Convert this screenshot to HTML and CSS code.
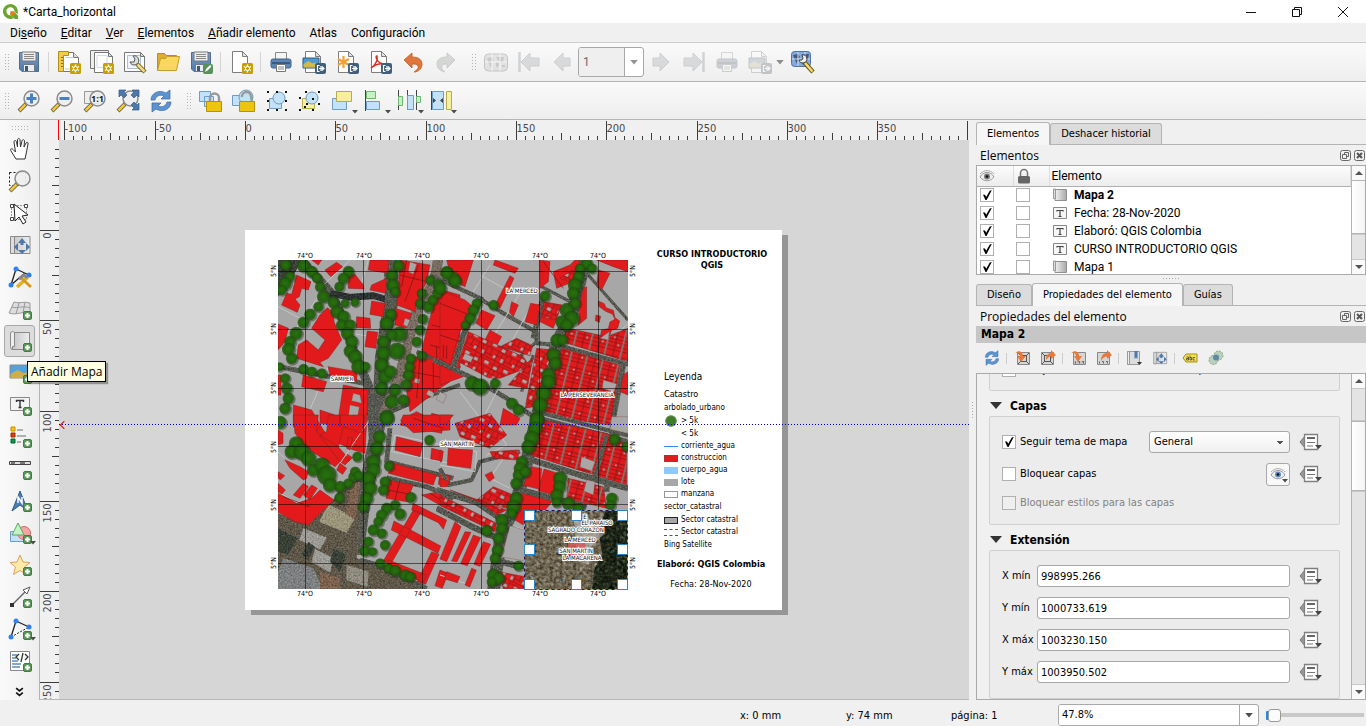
FILE: index.html
```html
<!DOCTYPE html>
<html lang="es">
<head>
<meta charset="utf-8">
<title>*Carta_horizontal</title>
<link rel="stylesheet" href="styles.css">
</head>
<body>
<svg class="defs" aria-hidden="true">
  <defs>
    <linearGradient id="g-steel" x1="0" y1="0" x2="0" y2="1"><stop offset="0" stop-color="#7ba0cc"/><stop offset="1" stop-color="#4f78a8"/></linearGradient>
    <linearGradient id="g-map" x1="0" y1="0" x2="1" y2="0"><stop offset="0" stop-color="#c4c4c4"/><stop offset="1" stop-color="#ededed"/></linearGradient>
    <linearGradient id="g-map2" x1="0" y1="0" x2="1" y2="0"><stop offset="0" stop-color="#f2f2f2"/><stop offset="1" stop-color="#a8a8a8"/></linearGradient>
  </defs>
  <symbol id="b-plus" viewBox="0 0 9 9"><rect x=".5" y=".5" width="8" height="8" rx="1.5" fill="#5c985c" stroke="#447a44"/><path d="M4.500 2v5M2 4.500h5" stroke="#fff" stroke-width="2"/></symbol>
  <symbol id="b-star" viewBox="0 0 11 11"><rect width="11" height="11" rx="1.500" fill="#c4a000"/><path d="M5.500 1.500v8M2 3.500l7 4M9 3.500l-7 4" stroke="#fff" stroke-width="1.300"/><circle cx="5.500" cy="5.500" r="2" fill="#c4a000" stroke="#fff"/></symbol>
  <symbol id="b-out" viewBox="0 0 11 11"><rect width="11" height="11" rx="2" fill="#415f78"/><path d="M4.500 2.500h-2v6h2M6 3v5M4 5.500h5M7 3.500l2 2-2 2" fill="none" stroke="#fff" stroke-width="1.200"/></symbol>
  <symbol id="b-menu" viewBox="0 0 6 4"><path d="M0 0h6L3 3.500z" fill="#4c4c4c"/></symbol>
  <symbol id="page" viewBox="0 0 24 24"><path d="M3.500 1.500h10l5 5v16h-15z" fill="#fff" stroke="#7d7d7d"/><path d="M13.500 1.500v5h5z" fill="#e4e4e4" stroke="#7d7d7d"/></symbol>
  <symbol id="mag" viewBox="0 0 24 24"><path d="M2 22l7-7" stroke="#555" stroke-width="4"/><path d="M2.500 21.500l6-6" stroke="#f3c932" stroke-width="2.500"/><circle cx="14.500" cy="9.500" r="7.500" fill="#eee" fill-opacity=".9" stroke="#8b8b8b" stroke-width="1.500"/></symbol>

  <symbol id="i-save" viewBox="0 0 24 24"><path d="M2.500 2.500h19v19H5l-2.500-2.500z" fill="url(#g-steel)" stroke="#4a6d98"/><path d="M5 2h14v9H5z" fill="#eee" stroke="#777"/><path d="M7 4.500h10M7 6.500h10M7 8.500h10" stroke="#888"/><path d="M6.500 14.500h11v7h-11z" fill="#ececec" stroke="#6b7b8f"/><path d="M8 16h3v5H8z" fill="#3d5878"/></symbol>
  <symbol id="i-new" viewBox="0 0 24 24"><path d="M2.500 2.500h14l5 5v14h-19z" fill="#fff" stroke="#777"/><path d="M16.500 2.500v5h5" fill="#ddd" stroke="#777"/><path d="M8.500 7.500h8M8 19h6" stroke="#bcd" fill="none"/><path d="M1.500 1.500h10v4h-5v16h-5z" fill="#f0cc4a" stroke="#b08e17"/><path d="M4 7.500h2M4 10.500h2M4 13.500h2M4 16.500h2" stroke="#8d6f0a"/><use href="#b-star" x="13" y="13" width="11" height="11"/></symbol>
  <symbol id="i-dup" viewBox="0 0 24 24"><path d="M.5.500h18v18H.5z" fill="#eee" stroke="#777"/><path d="M4.500 2.500h14l4 4v16h-18z" fill="#fff" stroke="#777"/><path d="M7 5.500h10v12H7z" fill="none" stroke="#cfdbe8"/><path d="M18.500 2.500v4h4z" fill="#ddd" stroke="#777"/><use href="#b-star" x="13" y="13" width="11" height="11"/></symbol>
  <symbol id="i-mgr" viewBox="0 0 24 24"><path d="M1.500 2.500h16l4 4v15h-20z" fill="#fff" stroke="#777"/><path d="M4.500 5.500h13v13h-13z" fill="#eef4fa" stroke="#a9c0da"/><path d="M17.500 2.500v4h4z" fill="#ddd" stroke="#777"/><path d="M14 14l8 8" stroke="#766012" stroke-width="4.500"/><path d="M14.500 14.500l7 7" stroke="#f1dc8c" stroke-width="2.500"/><path d="M10 6a4.500 4.500 0 1 1-3 6l4 0 1-3z" fill="#ddd" stroke="#555"/></symbol>
  <symbol id="i-open" viewBox="0 0 24 24"><path d="M1.500 20.500v-17h7l2 2h10v4" fill="#dcae2e" stroke="#b78d1e"/><path d="M1.500 20.500l3-12h5l2-2h12l-3 14z" fill="#f8d75c" stroke="#c69d2c"/></symbol>
  <symbol id="i-savet" viewBox="0 0 24 24"><use href="#i-save" width="24" height="24"/><rect x="14" y="14" width="10" height="10" rx="2" fill="#56915a"/><path d="M16 22l1-3 4-4 1.500 1.500-4 4z" fill="#fff"/></symbol>
  <symbol id="i-page" viewBox="0 0 24 24"><use href="#page" width="24" height="24"/><use href="#b-star" x="13" y="13" width="11" height="11"/></symbol>
  <symbol id="i-print" viewBox="0 0 24 24"><path d="M6.500 2.500h11v8h-11z" fill="#f5f5f5" stroke="#888"/><rect x="2" y="9" width="20" height="9" rx="2" fill="#5d85b4" stroke="#41628a"/><path d="M3 13h18" stroke="#395a82" stroke-width="2"/><path d="M7.500 14.500h9v7h-9z" fill="#fff" stroke="#777"/><path d="M9 17h6M9 19h6" stroke="#888"/></symbol>
  <symbol id="i-img" viewBox="0 0 24 24"><use href="#page" width="24" height="24"/><path d="M1 8h16v10H1z" fill="#4d9bd6" stroke="#2f5878"/><path d="M1.500 14l5-3 4 2.500 3-1 3 2v3h-15z" fill="#d6b84a"/><use href="#b-out" x="13" y="13" width="11" height="11"/></symbol>
  <symbol id="i-svg" viewBox="0 0 24 24"><use href="#page" width="24" height="24"/><path d="M8.500 6v12M3 9l11 6M14 9L3 15" stroke="#f4a033" stroke-width="2.200"/><use href="#b-out" x="13" y="13" width="11" height="11"/></symbol>
  <symbol id="i-pdf" viewBox="0 0 24 24"><use href="#page" width="24" height="24"/><path d="M3 18c5-3 7-9 6-12-2-1-1 7 7 8-4-1-9 1-13 4z" fill="none" stroke="#d8332b" stroke-width="1.500"/><use href="#b-out" x="13" y="13" width="11" height="11"/></symbol>
  <symbol id="i-undo" viewBox="0 0 24 24"><path d="M3 10l8-7v4c7 0 10 3 10 7 0 5-4 8-8 8 3-2 5-4 4-6-1-2-3-2-6-2v4z" fill="#e0763c" stroke="#bd5a22" stroke-width=".8"/></symbol>
  <symbol id="i-redo" viewBox="0 0 24 24"><path d="M21 10l-8-7v4C6 7 3 10 3 14c0 5 4 7 8 8-3-2-4-4-3-6s2-2 5-2v4z" fill="#7d9c7d" stroke="#5d6f5d"/></symbol>
  <symbol id="i-world" viewBox="0 0 24 24"><rect x=".5" y="4" width="23" height="17" rx="4" fill="#bbc" stroke="#555"/><path d="M3 8l5-1 2 3-2 2-1 6-2-4zM12 7h8l-1 5-3 1-2-3zM12 12l3 1-1 5-2-2zM18 15h3v2h-3z" fill="#667"/><path d="M8 4v17M16 4v17M1 12h22" stroke="#fff"/></symbol>
  <symbol id="i-first" viewBox="0 0 24 24"><path d="M2.500 2v20" stroke="#79869a" stroke-width="2.500"/><path d="M4 12l9-9v5h9v8h-9v5z" fill="#8ea0b6" stroke="#68788c"/></symbol>
  <symbol id="i-prev" viewBox="0 0 24 24"><path d="M4 12l9-9v5h7v8h-7v5z" fill="#8ea0b6" stroke="#68788c"/></symbol>
  <symbol id="i-next" viewBox="0 0 24 24"><path d="M20 12l-9-9v5H4v8h7v5z" fill="#8ea0b6" stroke="#68788c"/></symbol>
  <symbol id="i-last" viewBox="0 0 24 24"><path d="M21.500 2v20" stroke="#79869a" stroke-width="2.500"/><path d="M20 12l-9-9v5H2v8h9v5z" fill="#8ea0b6" stroke="#68788c"/></symbol>
  <symbol id="i-atlas" viewBox="0 0 24 24"><rect x=".5" y="1.500" width="19" height="15" rx="3" fill="#84a9da" stroke="#4e74a8"/><path d="M2 5l5-1 2 3-2 2-1 5-2-4zM11 4h7l-1 5-4 1zM11 10l3 2-2 3z" fill="#46597a"/><path d="M7 2v14M14 2v14M1 9h18" stroke="#cfe0f4"/><path d="M13 12l9 10" stroke="#6b5710" stroke-width="4.500"/><path d="M14 13l7.500 8.500" stroke="#f3dc7a" stroke-width="2.500"/><path d="M11 5a4 4 0 1 1-3 5l3 0 1-2z" fill="#eee" stroke="#444"/></symbol>

  <symbol id="i-zin" viewBox="0 0 24 24"><use href="#mag" width="24" height="24"/><path d="M14.500 4.500v10M9.500 9.500h10" stroke="#4a7fc0" stroke-width="3"/></symbol>
  <symbol id="i-zout" viewBox="0 0 24 24"><use href="#mag" width="24" height="24"/><path d="M9.500 9.500h10" stroke="#4a7fc0" stroke-width="3"/></symbol>
  <symbol id="i-z1" viewBox="0 0 24 24"><path d="M1.500 2.500h14v12h-14z" fill="#eee" stroke="#999"/><use href="#mag" width="24" height="24"/><text x="8" y="13" font-size="9" font-weight="700" font-family="Open Sans, sans-serif" fill="#222">1:1</text></symbol>
  <symbol id="i-zfull" viewBox="0 0 24 24"><use href="#mag" width="24" height="24"/><path d="M3 1h7l-2 2 3 3-3 3-3-3-2 2zM23 1h-7l2 2-3 3 3 3 3-3 2 2zM23 21h-7l2-2-3-3 3-3 3 3 2-2z" fill="#4c78ab" stroke="#345a86" stroke-width=".7"/></symbol>
  <symbol id="i-ref" viewBox="0 0 24 24"><path d="M2 11C2 4 10 0 17 4l4-3v9h-9l3-3c-4-2-8 0-9 4z" fill="#5c93d1" stroke="#3b6ca6" stroke-width=".7"/><path d="M22 13c0 7-8 11-15 7l-4 3v-9h9l-3 3c4 2 8 0 9-4z" fill="#5c93d1" stroke="#3b6ca6" stroke-width=".7"/></symbol>
  <symbol id="i-lock" viewBox="0 0 24 24"><path d="M.5 2.500h11v10H.5zM5.500 7.500h9v10h-9z" fill="#c3e2f8" stroke="#6d9cc4"/><path d="M11 12V9a4.500 4.500 0 0 1 9 0v3" fill="none" stroke="#999" stroke-width="2.500"/><path d="M7.500 12.500h15v10h-15z" fill="#eec50e" stroke="#b29208"/></symbol>
  <symbol id="i-unlock" viewBox="0 0 24 24"><path d="M.5 6.500h11v10H.5z" fill="#c3e2f8" stroke="#6d9cc4"/><circle cx="14" cy="8" r="7" fill="#c3e2f8" stroke="#6d9cc4"/><path d="M10 8a4.500 4.500 0 0 1 9-1l1 5" fill="none" stroke="#999" stroke-width="2.500"/><path d="M7.500 12.500h15v10h-15z" fill="#eec50e" stroke="#b29208"/></symbol>
  <symbol id="i-group" viewBox="0 0 24 24"><path d="M4.500 9.500h12v10h-12z" fill="#c3e2f8" stroke="#6d9cc4"/><circle cx="14" cy="9" r="6" fill="#c3e2f8" stroke="#6d9cc4"/><path d="M2 2h2v2H2zM11 2h2v2h-2zM20 2h2v2h-2zM2 11h2v2H2zM20 11h2v2h-2zM2 20h2v2H2zM11 20h2v2h-2zM20 20h2v2h-2z" fill="#111"/></symbol>
  <symbol id="i-ungroup" viewBox="0 0 24 24"><path d="M4.500 9.500h12v10h-12z" fill="#f5efa0" stroke="#b5ac4e"/><circle cx="14" cy="9" r="6" fill="#c3e2f8" stroke="#6d9cc4"/><path d="M7 2h2v2H7zM20 2h2v2h-2zM1 8h2v2H1zM1 20h2v2H1zM8 14h2v2H8zM20 14h2v2h-2zM14 9h2v2h-2zM14 20h2v2h-2zM6 17h2v2H6z" fill="#111"/></symbol>
  <symbol id="i-raise" viewBox="0 0 24 24"><path d="M1.500 9.500h14v11h-14z" fill="#c3e2f8" stroke="#6d9cc4"/><path d="M5.500 2.500h15v10h-15z" fill="#f5efa0" stroke="#b5ac4e"/></symbol>
  <symbol id="i-align" viewBox="0 0 24 24"><path d="M1.500 1v21" stroke="#444"/><path d="M2.500 2.500h9v7h-9z" fill="#c5f2c5" stroke="#6fb56f"/><path d="M2.500 12.500h13v8h-13z" fill="#c3e2f8" stroke="#6d9cc4"/></symbol>
  <symbol id="i-dist" viewBox="0 0 24 24"><path d="M1.500 1v20M10.500 1v20M19.500 1v20" stroke="#444"/><path d="M1.500 7.500h4v9h-4zM19.500 7.500h4v6h-4z" fill="#c5f2c5" stroke="#6fb56f"/><path d="M10.500 6.500h6v14h-6z" fill="#c3e2f8" stroke="#6d9cc4"/></symbol>
  <symbol id="i-resize" viewBox="0 0 24 24"><path d="M1.500 2v19" stroke="#444"/><path d="M2.500 2.500h11v18h-11z" fill="#c3e2f8" stroke="#6d9cc4"/><path d="M3 9v5l3-2.500zM13 9v5l-3-2.500z" fill="#444"/><path d="M16.500 2.500h5v18h-5z" fill="#f5efa0" stroke="#b5ac4e"/></symbol>

  <symbol id="i-pan" viewBox="0 0 24 24"><path d="M8 22l-5-8c-1.500-2 1-3 2-1.500L7.500 15 6 5c0-2 2-2 2.500 0l1 5V3c0-2 2.500-2 2.500 0l.5 7L14 4c.5-2 2.500-1.500 2.500 0L16 10l2-4c1-1.500 2.500-.5 2 1l-1.500 8-1.500 7z" fill="#fff" stroke="#333"/></symbol>
  <symbol id="i-zoom" viewBox="0 0 24 24"><path d="M1.500 3.500h16v13h-16z" fill="none" stroke="#111" stroke-dasharray="2 2"/><use href="#mag" width="24" height="24"/></symbol>
  <symbol id="i-sel" viewBox="0 0 24 24"><path d="M3.500 4.500h15v14h-15z" fill="none" stroke="#333" stroke-dasharray="1 2"/><path d="M2.500 3.500h3v3h-3zM16.500 3.500h3v3h-3zM2.500 16.500h3v3h-3z" fill="#fff" stroke="#444"/><path d="M6 3l1 17 4-4 4 7 3-2-4-6 6-1z" fill="#fff" stroke="#222"/></symbol>
  <symbol id="i-move" viewBox="0 0 24 24"><path d="M6 3.500h16v17H3z" fill="url(#g-map)" stroke="#8a8a8a"/><path d="M2.500 3.500h4v17h-4z" fill="#ddd" stroke="#8a8a8a"/><path d="M14 5l4 5h-2.500v2h-3v-2H10zM14 21l4-4h-8zM6 14l4-4v8zM22 14l-4-4v8z" fill="#4c78ab"/></symbol>
  <symbol id="i-node" viewBox="0 0 24 24"><path d="M8 4L3 20M8 4l13 6M3 20L17 8" fill="none" stroke="#222" stroke-width="1.300"/><path d="M9 22L20 12" stroke="#e6ae23" stroke-width="3.500"/><path d="M12 12l11 10" stroke="#d59a1d" stroke-width="3"/><path d="M11 14l5-4 3 3" stroke="#888" stroke-width="3" fill="none"/><circle cx="8" cy="4" r="2.500" fill="#2f80f0"/><circle cx="21" cy="10" r="2.500" fill="#2f80f0"/><circle cx="3" cy="20" r="2.500" fill="#2f80f0"/></symbol>
  <symbol id="i-3d" viewBox="0 0 24 24"><path d="M1 16L6 5c5 2 9-1 16 1v11c-7-4-13 2-21-1z" fill="#ddd" stroke="#999"/><path d="M4 10c6 2 11-2 18 1M11 6L8 17M17 5l-2 11" fill="none" stroke="#999"/><use href="#b-plus" x="15" y="14" width="9" height="9"/></symbol>
  <symbol id="i-map" viewBox="0 0 24 24"><path d="M5 3.500h16.500v17H4z" fill="url(#g-map)" stroke="#8a8a8a"/><path d="M2.500 3.500q2-2 4 0v14h-2v3q-2 0-2-3z" fill="#eee" stroke="#8a8a8a"/><use href="#b-plus" x="15" y="14" width="9" height="9"/></symbol>
  <symbol id="i-pic" viewBox="0 0 24 24"><path d="M2 4h20v13H2z" fill="#4fa3e0" stroke="#888"/><path d="M2.500 13l7-4 6 3 6-1v6h-19z" fill="#cfae4a"/><use href="#b-plus" x="15" y="14" width="9" height="9"/></symbol>
  <symbol id="i-label" viewBox="0 0 24 24"><path d="M2.500 4.500h19v13h-19z" fill="#f4f4f4" stroke="#888"/><path d="M8.500 9V7.500h7V9M12 7.500v7M10.500 14.500h3" fill="none" stroke="#333" stroke-width="1.400"/><use href="#b-plus" x="15" y="14" width="9" height="9"/></symbol>
  <symbol id="i-leg" viewBox="0 0 24 24"><path d="M3 2h4v4H3z" fill="#ffc400" stroke="#c88b00"/><path d="M3 8h4v4H3z" fill="#e63c00" stroke="#a02a00"/><path d="M3 14h4v4H3z" fill="#00a050" stroke="#006030"/><path d="M9 5h6M9 11h9M9 17h4" stroke="#999" stroke-width="1.500"/><use href="#b-plus" x="15" y="14" width="9" height="9"/></symbol>
  <symbol id="i-scale" viewBox="0 0 24 24"><path d="M1.500 4.500h21v3h-21z" fill="#ddd" stroke="#444"/><path d="M3 6h4M12 6h5" stroke="#777" stroke-width="2"/><use href="#b-plus" x="15" y="14" width="9" height="9"/></symbol>
  <symbol id="i-north" viewBox="0 0 24 24"><path d="M12 2l8 20-8-6-8 6z" fill="#4f7fb2" stroke="#2e5a87"/><path d="M10 14V8l4 6V8" fill="none" stroke="#fff" stroke-width="1.500"/><use href="#b-plus" x="15" y="14" width="9" height="9"/></symbol>
  <symbol id="i-shape" viewBox="0 0 24 24"><path d="M2.500 10.500h13v10h-13z" fill="#c3e2f8" stroke="#6d9cc4"/><circle cx="16" cy="12" r="6.500" fill="#f5a3a3" stroke="#d06a6a"/><path d="M10 2l6 12H4z" fill="#c5f2c5" stroke="#5fa55f"/><use href="#b-plus" x="15" y="14" width="9" height="9"/></symbol>
  <symbol id="i-star" viewBox="0 0 24 24"><path d="M12 2l3 7 7 .5-5.500 4.500 2 7.500-6.500-4-6.500 4 2-7.500L2 9.500 9 9z" fill="#fdeaa8" stroke="#e0a05a"/><use href="#b-plus" x="15" y="14" width="9" height="9"/></symbol>
  <symbol id="i-arrow" viewBox="0 0 24 24"><path d="M4 20L18 6" stroke="#666" stroke-width="1.500"/><path d="M2 18h4v4H2z" fill="#333"/><path d="M22 2l-7 3 4 4z" fill="#fff" stroke="#555"/><use href="#b-plus" x="15" y="14" width="9" height="9"/></symbol>
  <symbol id="i-poly" viewBox="0 0 24 24"><path d="M8 4L3 20M8 4l13 6" fill="none" stroke="#222" stroke-width="1.300"/><path d="M3 20l18-10" stroke="#222" stroke-dasharray="2 1.500"/><circle cx="8" cy="4" r="2.500" fill="#2f80f0"/><circle cx="21" cy="10" r="2.500" fill="#2f80f0"/><circle cx="3" cy="20" r="2.500" fill="#2f80f0"/><use href="#b-plus" x="15" y="14" width="9" height="9"/></symbol>
  <symbol id="i-html" viewBox="0 0 24 24"><path d="M2.500 2.500h19v19h-19z" fill="#fff" stroke="#888"/><path d="M4 6h5M4 9h4M4 12h6M4 15h9M4 18h8" stroke="#5b8cc4" stroke-width="1.600"/><path d="M11 5L8 8l3 3M17 5l3 3-3 3M15 4l-2 9" fill="none" stroke="#333" stroke-width="1.300"/><use href="#b-plus" x="15" y="14" width="9" height="9"/></symbol>

  <symbol id="i-eye" viewBox="0 0 16 12"><path d="M1 7C4 1 12 1 15 7c-4 5-10 5-14 0z" fill="#eee" stroke="#999"/><path d="M1 4C5-.500 11-.500 15 4" fill="none" stroke="#aaa"/><circle cx="8" cy="6.500" r="3" fill="var(--iris, #777)"/><circle cx="8" cy="6.500" r="1.300" fill="#111"/></symbol>
  <symbol id="i-padlock" viewBox="0 0 14 16"><path d="M3.500 8V5a3.500 3.500 0 0 1 7 0v3" fill="none" stroke="#777" stroke-width="1.500"/><rect x="1" y="8" width="12" height="7.500" rx="1.500" fill="#666"/></symbol>
  <symbol id="i-rowmap" viewBox="0 0 14 14"><path d="M2 1.500h11.500v11H2z" fill="url(#g-map2)" stroke="#909090"/><path d="M.5 1v9.500h2V1z" fill="#ddd" stroke="#999"/></symbol>
  <symbol id="i-rowtext" viewBox="0 0 14 14"><path d="M.5 1.500h13v11H.5z" fill="#f6f6f6" stroke="#888"/><path d="M4 5.500v-1h6v1M7 4.500v5.500M5.500 10.500h3" fill="none" stroke="#444" stroke-width="1.200"/></symbol>
  <symbol id="i-float" viewBox="0 0 11 11"><rect x=".5" y=".5" width="10" height="10" rx="2" fill="none" stroke="#666"/><path d="M4.500 4V2.500h4v4H7M2.500 4.500h4v4h-4z" fill="none" stroke="#666"/></symbol>
  <symbol id="i-close" viewBox="0 0 11 11"><rect x=".5" y=".5" width="10" height="10" rx="2" fill="none" stroke="#666"/><path d="M3 3l5 5M8 3L3 8" stroke="#555" stroke-width="2"/></symbol>
  <symbol id="i-over" viewBox="0 0 24 18"><path d="M6 3v12L1 9z" fill="#999" stroke="#777"/><path d="M5.500 1.500h13v15h-13z" fill="#fff" stroke="#808080" stroke-width="1.300"/><path d="M8 5h8" stroke="#555" stroke-width="1.800"/><path d="M8 9.500h8M8 13h6" stroke="#777"/><path d="M16 12h7l-3.500 4z" fill="#444"/></symbol>
  <symbol id="p-toitem" viewBox="0 0 16 16"><path d="M3.500 2.500h12v12h-12z" fill="#d6d6d6" stroke="#888"/><path d="M6.500 5.500h6v6h-6zM4 3l3 3M15 3l-3 3M4 14l3-3M15 14l-3-3" fill="none" stroke="#555"/><path d="M1 3c5-4 8 0 8 3h3l-5 6-4-6h3C6 4 4 2 1 3z" fill="#e8793a"/></symbol>
  <symbol id="p-tocanvas" viewBox="0 0 16 16"><path d="M1.500 2.500h12v12h-12z" fill="#d6d6d6" stroke="#888"/><path d="M4.500 5.500h6v6h-6zM2 3l3 3M2 14l3-3M13 14l-3-3" fill="none" stroke="#555"/><path d="M6 10c0-5 2-7 5-7V0l5 5-5 4V6.500c-2 0-3 1-5 3.500z" fill="#e8793a"/></symbol>
  <symbol id="p-scalein" viewBox="0 0 16 16"><path d="M3.500 2.500h12v12h-12z" fill="#d6d6d6" stroke="#888"/><path d="M4 11h11v3H4z" fill="#c4c4c4"/><path d="M5.500 11.500v2M8 11.500h1.500v2M12 11.500h1.500v2" fill="none" stroke="#666"/><path d="M1 3c5-4 8 0 8 3h3l-4 6-4-6h2C6 4 4 2 1 3z" fill="#e8793a"/></symbol>
  <symbol id="p-scaleout" viewBox="0 0 16 16"><path d="M1.500 2.500h12v12h-12z" fill="#d6d6d6" stroke="#888"/><path d="M3.500 11.500v2M6 11.500h1.500v2M10 11.500h1.500v2" fill="none" stroke="#666"/><path d="M5 11c0-6 3-8 6-8V0l5 5-5 4V6.500c-2 0-4 1-6 4.500z" fill="#e8793a"/></symbol>
  <symbol id="p-book" viewBox="0 0 16 16"><path d="M1.500 1.500h12v13h-12z" fill="#ddd" stroke="#999"/><path d="M1.500 1.500h2v13h-2z" fill="#eee" stroke="#999"/><path d="M8.500 1h3v8L10 7.500 8.500 9z" fill="#4c78ab"/><path d="M11 12h5l-2.500 3z" fill="#333"/></symbol>
  <symbol id="p-abc" viewBox="0 0 16 16"><path d="M1 8l3-4h11v8H4z" fill="#f6e04a" stroke="#a98d0e"/><path d="M4.500 7h2v3h-2v-1.500h2M8 5.500v4.500h1.500V7.500H8M13 7.500h-2V10h2" fill="none" stroke="#444" stroke-width=".8"/></symbol>
  <symbol id="p-clip" viewBox="0 0 16 16"><circle cx="10.500" cy="5.500" r="4.500" fill="#b9cfb9" stroke="#8aa88a" stroke-dasharray="2 1"/><circle cx="5.500" cy="10" r="4.500" fill="#b9cfb9" stroke="#8aa88a" stroke-dasharray="2 1"/><circle cx="8" cy="7.500" r="3" fill="#6288a8"/></symbol>
</svg>

<header class="titlebar">
  <svg class="logo" viewBox="0 0 18 18"><path d="M9 1a8 8 0 1 0 3.500 15.200L9.500 13A4.300 4.300 0 1 1 13.200 9l3 3A8 8 0 0 0 9 1z" fill="#6aa62e"/><path d="M9 9h3.500l4.500 4.500V17h-3.500L9 12.500z" fill="#6aa62e"/><path d="M9 9h3l2 2-3 3-2-2z" fill="#ee7913"/></svg>
  <span class="title">*Carta_horizontal</span>
  <div class="winbtns">
    <button type="button" aria-label="Minimizar"><svg viewBox="0 0 12 12"><path d="M1 6.500h10" stroke="#111"/></svg></button>
    <button type="button" aria-label="Restaurar"><svg viewBox="0 0 12 12"><path d="M1.500 3.500h7v7h-7zM3.500 3.500v-2h7v7h-2" fill="none" stroke="#111"/></svg></button>
    <button type="button" aria-label="Cerrar"><svg viewBox="0 0 12 12"><path d="M1 1l10 10M11 1L1 11" stroke="#111"/></svg></button>
  </div>
</header>
<nav class="menubar">
  <a href="#">Di<u>s</u>eño</a><a href="#"><u>E</u>ditar</a><a href="#"><u>V</u>er</a><a href="#"><u>E</u>lementos</a><a href="#"><u>A</u>ñadir elemento</a><a href="#">Atlas</a><a href="#">Configuración</a>
</nav>
<div class="toolbar">
  <i class="grip"></i>
  <button class="tool" type="button" data-icon="save" aria-label="Guardar"></button>
  <i class="sep"></i>
  <button class="tool" type="button" data-icon="new" aria-label="Nueva"></button>
  <button class="tool" type="button" data-icon="dup" aria-label="Duplicar"></button>
  <button class="tool" type="button" data-icon="mgr" aria-label="Administrador"></button>
  <button class="tool" type="button" data-icon="open" aria-label="Abrir"></button>
  <button class="tool" type="button" data-icon="savet" aria-label="Guardar plantilla"></button>
  <i class="sep"></i>
  <button class="tool" type="button" data-icon="page" aria-label="Añadir página"></button>
  <i class="sep"></i>
  <button class="tool" type="button" data-icon="print" aria-label="Imprimir"></button>
  <button class="tool" type="button" data-icon="img" aria-label="Exportar imagen"></button>
  <button class="tool" type="button" data-icon="svg" aria-label="Exportar SVG"></button>
  <button class="tool" type="button" data-icon="pdf" aria-label="Exportar PDF"></button>
  <button class="tool" type="button" data-icon="undo" aria-label="Deshacer"></button>
  <button class="tool" type="button" data-icon="redo" aria-label="Rehacer" disabled></button>
  <i class="grip mid"></i>
  <button class="tool" type="button" data-icon="world" aria-label="Vista de atlas" disabled></button>
  <button class="tool" type="button" data-icon="first" aria-label="Primero" disabled></button>
  <button class="tool" type="button" data-icon="prev" aria-label="Anterior" disabled></button>
  <div class="pagebox"><input value="1" aria-label="Objeto" disabled><button type="button" aria-label="Lista" disabled><svg class="caret"><use href="#b-menu"/></svg></button></div>
  <button class="tool" type="button" data-icon="next" aria-label="Siguiente" disabled></button>
  <button class="tool" type="button" data-icon="last" aria-label="Último" disabled></button>
  <button class="tool" type="button" data-icon="print" aria-label="Imprimir atlas" disabled></button>
  <button class="tool" type="button" data-icon="img" aria-label="Exportar atlas" disabled></button>
  <svg class="caret pale"><use href="#b-menu"/></svg>
  <button class="tool" type="button" data-icon="atlas" aria-label="Configuración de atlas"></button>
</div>
<div class="toolbar second">
  <i class="grip"></i>
  <button class="tool" type="button" data-icon="zin" aria-label="Acercar"></button>
  <button class="tool" type="button" data-icon="zout" aria-label="Alejar"></button>
  <button class="tool" type="button" data-icon="z1" aria-label="Zum 100%"></button>
  <button class="tool" type="button" data-icon="zfull" aria-label="Zum general"></button>
  <button class="tool" type="button" data-icon="ref" aria-label="Actualizar"></button>
  <i class="grip mid"></i>
  <button class="tool" type="button" data-icon="lock" aria-label="Bloquear"></button>
  <button class="tool" type="button" data-icon="unlock" aria-label="Desbloquear"></button>
  <button class="tool" type="button" data-icon="group" aria-label="Agrupar"></button>
  <button class="tool" type="button" data-icon="ungroup" aria-label="Desagrupar"></button>
  <button class="tool drop" type="button" data-icon="raise" aria-label="Subir"></button>
  <button class="tool drop" type="button" data-icon="align" aria-label="Alinear"></button>
  <button class="tool drop" type="button" data-icon="dist" aria-label="Distribuir"></button>
  <button class="tool drop" type="button" data-icon="resize" aria-label="Redimensionar"></button>
</div>

<main class="work">
  <div class="toolbox">
    <i class="grip flat"></i>
    <button class="tool" type="button" data-icon="pan" aria-label="Desplazar"></button>
    <button class="tool" type="button" data-icon="zoom" aria-label="Zum"></button>
    <button class="tool" type="button" data-icon="sel" aria-label="Seleccionar"></button>
    <button class="tool" type="button" data-icon="move" aria-label="Mover contenido"></button>
    <button class="tool" type="button" data-icon="node" aria-label="Editar nodos"></button>
    <button class="tool" type="button" data-icon="3d" aria-label="Añadir mapa 3D"></button>
    <button class="tool on" type="button" data-icon="map" aria-label="Añadir Mapa"><span class="tip">Añadir Mapa</span></button>
    <button class="tool" type="button" data-icon="pic" aria-label="Añadir imagen"></button>
    <button class="tool" type="button" data-icon="label" aria-label="Añadir etiqueta"></button>
    <button class="tool" type="button" data-icon="leg" aria-label="Añadir leyenda"></button>
    <button class="tool" type="button" data-icon="scale" aria-label="Añadir escala"></button>
    <button class="tool" type="button" data-icon="north" aria-label="Añadir norte"></button>
    <button class="tool drop" type="button" data-icon="shape" aria-label="Añadir forma"></button>
    <button class="tool" type="button" data-icon="star" aria-label="Añadir marcador"></button>
    <button class="tool" type="button" data-icon="arrow" aria-label="Añadir flecha"></button>
    <button class="tool drop" type="button" data-icon="poly" aria-label="Añadir nodo"></button>
    <button class="tool" type="button" data-icon="html" aria-label="Añadir HTML"></button>
    <button class="more" type="button" aria-label="Más"><svg viewBox="0 0 8 9"><path d="M1 1l3 2.500L7 1M1 5l3 2.500L7 5" fill="none" stroke="#111" stroke-width="1.500"/></svg></button>
  </div>
  <div class="stage">
    <div class="corner"></div>
    <svg class="ruler rh" id="rh"></svg>
    <svg class="ruler rv" id="rv"></svg>
    <div class="canvas">
      <section class="paper">
        <svg class="map" id="map" viewBox="268 250 370 349">
          <defs>
            <filter id="noise" x="0" y="0" width="1" height="1" color-interpolation-filters="sRGB"><feTurbulence type="fractalNoise" baseFrequency=".2" numOctaves="3" seed="7"/><feColorMatrix values=".5 .5 .3 0 -.15 .5 .5 .27 0 -.15 .5 .5 .22 0 -.15 0 0 0 0 1"/><feComposite in2="SourceGraphic" operator="in" result="n"/><feBlend in="n" in2="SourceGraphic" mode="soft-light"/></filter>
            <filter id="rough" x="0" y="0" width="1" height="1" color-interpolation-filters="sRGB"><feTurbulence type="fractalNoise" baseFrequency=".3" numOctaves="4" seed="3"/><feColorMatrix values=".9 .9 .4 0 -.6 .9 .9 .4 0 -.6 .9 .9 .4 0 -.62 0 0 0 0 1"/><feComposite in2="SourceGraphic" operator="in" result="n"/><feBlend in="n" in2="SourceGraphic" mode="soft-light"/></filter>
            <radialGradient id="tree"><stop offset="0" stop-color="#2a7010"/><stop offset=".6" stop-color="#22650b"/><stop offset="1" stop-color="#1c4d0b" stop-opacity=".6"/></radialGradient>
            <pattern id="dense" width="48" height="62" patternUnits="userSpaceOnUse" patternTransform="rotate(14)"><rect width="48" height="62" fill="#e31a1c"/><path d="M0 8h48M0 19h48M0 29h48M0 41h48M0 52h48M21 0v62" stroke="#6e1414" stroke-width="2"/><path d="M44 0v62" stroke="#7b7f78" stroke-width="5"/><path d="M12 11h5v5h-5zM28 32h5v6h-5z" fill="#a7a7a7"/></pattern>
            <pattern id="small" width="64" height="58" patternUnits="userSpaceOnUse" patternTransform="rotate(27)"><rect width="64" height="58" fill="#e31a1c"/><path d="M0 12h30M30 6h34M0 26h64M0 40h34M34 46h30M0 57h64M14 0v26M30 0v26M46 6v20M10 26v31M24 26v14M38 26v31M54 26v20" fill="none" stroke="#701616" stroke-width="1.800"/><path d="M16 14h12v9H16zM48 9h14v9H48zM26 42h8v12h-8zM0 42h8v9H0z" fill="#a7a7a7"/></pattern>
            <clipPath id="frame"><path d="M278 260h350v329H278z"/></clipPath>
          </defs>
          <g clip-path="url(#frame)">
            <path d="M278 260h350v329H278z" fill="#a7a7a7"/>
            <g class="q" transform="translate(240 225) scale(.3333)">
              <g class="road" filter="url(#noise)">
                <path class="fill" d="M114 105h70l-30 60-40 50z"/>
                <path stroke-width="26" d="M190 112L270 200 300 260 350 400 385 480 400 640 355 860"/>
                <path class="deep" stroke-width="20" d="M270 205L330 217 400 212 455 228"/>
                <path stroke-width="40" d="M452 105L455 230 440 300 425 400 415 600 400 700 370 840 350 990"/>
                <path class="tan" stroke-width="30" d="M595 100L585 165 530 260 505 350 480 450 430 570"/>
                <path stroke-width="14" d="M114 425L270 455 385 478"/>
                <path stroke-width="12" d="M530 380L660 430M430 570L560 515 660 480M635 430L675 330"/>
              </g>
              <g class="lotline"><path d="M235 215L120 380M385 105L360 190M330 105L240 190 200 155M114 245L180 280M265 425L190 600M310 320L420 340"/></g>
              <g class="red">
                <path d="M170 150L213 170 205 195 185 190 178 215 165 222 180 240 172 262 125 240 140 205 155 208zM114 297L145 310 135 350 114 375zM262 248L280 262 282 290 305 345 265 400 240 412 250 425 170 400 175 360 200 345 235 375 255 345 215 310 240 270zM350 275l40 5 2 30-44-2zM382 318l31 4-5 48-33-5zM395 228l40 7-5 40-40-7zM390 105h55v40l-60-10zM325 150l20-2 25 32 2 12-47-2zM395 180l45-20-2 45-48-10zM255 135l35-23 18 13-36 30zM215 105h30l-10 15zM480 105l90 15-10 50-30 60-5 30-55-20 5-60zM465 250l50 15-15 45-35-10zM590 190l70 20v220l-85-35-30-20 30-115zM520 395l80 10 30 30v35l-30 20-90 70-10-60zM114 450h9v60h-9zM190 450l70 20-10 30-65-15zM310 480l75 15-10 190-35-10-55-25zM160 540l55 15 35 60 80 90-15 15-90-60-65-55zM240 555l45 15v30l-45-5zM264 425l88 15-2 28-80-18zM480 600l10-20 40-20 30 15 10 25 5-35 40 10-10 50z"/>
              </g>
              <g class="hole"><path d="M340 505l20 5 5 25-30-8zM330 540l28 6-10 55-25-8zM525 460l15 3-3 13-15-4zM565 495l18 8-4 15-20-10zM600 500l20 10-10 25-22-12zM510 110l20 8-10 30-15-8zM495 280l15 5-8 20-12-6z"/></g>
              <path class="thin" d="M480 150l80 20M500 105l-15 80M535 120l-40 110M575 300l85 20M570 360l80 20M590 365v35M605 365v40M620 370v40M540 400l-10 120M580 405v100M510 440l110 20"/>
            </g>
            <g class="q" transform="translate(440 225) scale(.3333)">
              <g class="road" filter="url(#noise)">
                <path stroke-width="12" d="M-30 150L110 215 190 265 290 322V355L350 360 570 420"/>
                <path stroke-width="9" d="M440 145L564 285M305 185L400 235M290 350L160 465M280 390L245 500"/>
                <path stroke-width="16" d="M125 215L70 330 40 425M310 215L280 340M550 420L520 580 500 800"/>
                <path stroke-width="38" d="M435 105L395 270 355 345 330 420 290 580 265 690 225 850 185 920 160 1100"/>
                <path stroke-width="14" d="M-20 405L100 460 200 520 280 575 564 650"/>
              </g>
              <g class="lotline"><path d="M120 150l90 50M240 205l-80 130M275 240l-60 110M60 500l60 80M180 480l-60 120M560 300l-70 60M150 120L100 200"/></g>
              <g class="red">
                <path d="M20 105h80L75 185 35 165zM0 195l75 30 30 25-45 70-30 100-30-20zM0 420l70 35L0 480zM125 255l40 17-25 43-32-20zM150 315l35 20-15 27-35-17zM165 105l70 25-10 15-65-25zM210 152l12 8-42 90-15-10zM215 230l20 10-15 35-12-13zM272 235l28 5-10 60-35-10zM300 105l30 5-5 60-25 20zM340 140l50-20 15-15 15 3-20 62-50 20zM312 230l53 10-25 70-40-20zM430 190l10-5v95l-25 20 5-70zM475 135l35 10-25 50-15-15zM470 105h94v35l-44-15zM475 228l18 8 5 12 22 8 5 22 14 10-6 22-18 6-8 20-25-6 3-15 20-4 5-20 15-8-8-16-20-8-22-16zM468 270l14 4-4 18-12-5zM550 450l14-10v70l-24-10zM190 550l50 30-10 20h-50z"/>
                <path fill="url(#small)" d="M85 320L250 395 270 425 180 460 145 458 55 410zM180 365L230 340 278 362 270 392zM205 480L265 410 278 400 262 490zM290 370L340 375 318 440 282 545 255 550zM360 160L420 120 400 175zM318 235L365 240 345 285 305 275z"/>
                <path fill="url(#dense)" d="M385 310L500 335 564 310V410L365 350zM365 370L540 420 510 600 380 582 305 560zM305 585L500 625 560 660 560 780 480 755 270 690z"/>
              </g>
              <g class="hole"><path d="M75 385l25 12-8 15-25-10zM490 465l40 12-8 25-35-12zM480 340l25 5 3-25z"/></g>
              <path class="thin" d="M0 235l90 35M0 330l60 20M10 360v40M20 362v40M380 310l-10 40M310 110l60 80"/>
            </g>
            <g class="q" transform="translate(240 415) scale(.3333)">
              <path d="M205 330L280 255 300 220 360 190 362 290 350 430 420 450 560 521V560H100V290z" fill="#5e584c" filter="url(#noise)"/>
              <g filter="url(#noise)">
                <path d="M265 268l80 40-25 45-82-33z" fill="#9c9780"/><path d="M190 340l70 28-20 35-62-28zM225 402l55 28-10 42-55-30z" fill="#9d9d99"/><path d="M130 430l90 30 30 65H114v-50z" fill="#7e8286"/><path d="M320 450l66 20-4 45-62-20z" fill="#8e8d84"/><path d="M340 195l20 10-15 110-30-20zM240 470l60 20v40h-60z" fill="#7d6353"/><path d="M114 340l60 30-30 50-30-10zM280 400l40 20-20 50-30-30zM205 380l20 15-20 40-20-15z" fill="#38413a"/>
              </g>
              <g class="road" filter="url(#noise)">
                <path stroke-width="14" d="M450 40L440 140 640 190M440 188L560 215 640 250M360 435L420 452 560 521"/>
              </g>
              <g class="lotline"><path d="M465 60l165 35v50l-175-35zM550 85v45M385 20L300 145 200 60M114 110l20 20M120 235l50 28 60-28"/></g>
              <g class="red">
                <path d="M114 235l56 30 45-15 25-25 42 30-77 75-40-10-51-28zM135 135l45 20 25 15-5 20-10 5-40-35zM190 205l15 10-25 35-20-10zM215 210l17 10-22 35-20-15zM114 170l20 12-12 12-8-4zM114 205l22 20-10 12-12-6zM114 45l15 10v30l-15 5zM160 0h75l-5 50 70 90-15 15-90-60-30-40zM265 0h110l-10 55-55-20-15 60-55-35 20-10zM300 145l20 15-12 18-18-13zM322 118l16 10-13 12zM325 65l13 5-8 35-10-5zM470 65l78 20-8 40-75-20zM575 100l33 8-3 30-33-6zM490 0h140v45l-110 8-38-35zM460 145l130 35-10 30-135-35zM445 195l75 15-20 50-62-10zM600 175l30 8v30l-35-5zM545 240l65-12-10 42z"/>
                <path d="M462 318l140 75-8 22-140-70zM520 285l22 8-90 155-22-10zM445 435l115 45-10 22-110-42zM575 410l22 8-40 90-25-8zM520 265l100 50-10 28-15-20-80-38zM600 465l25 10-18 45-22-8z"/>
              </g>
              <path class="thin" d="M480 195l-15 60M445 225l60 12M570 235l40 25M130 245l80 30M520 10l90 30M300 0v35"/>
            </g>
            <g class="q" transform="translate(440 415) scale(.3333)">
              <g class="road" filter="url(#noise)">
                <path stroke-width="12" d="M0 160L25 210 95 195 120 140 240 110M290 -10L564 62M500 60L465 185"/>
                <path stroke-width="18" d="M-10 225L110 262 180 310M-10 280L90 332 185 375M265 132L420 180 564 220M240 225L440 275M185 440L255 460"/>
              </g>
              <g class="lotline"><path d="M0 90l110 20-5 60-105-20M160 30l40 60-60 30M190 130l-40 60 60 30M255 345l-30-10-40 95M0 480l90 30"/></g>
              <g class="red">
                <path d="M0 0h40L20 25 0 30zM25 100l73 5-6 55-70-10zM0 105l10 5-5 30H0zM135 180l20-10 8 18-15 12zM0 190l30 10-10 15H0zM45 320l18 15L20 440 0 432zM75 350l18 2-42 88-16-2zM100 360l22 8-40 84-20-6zM130 380l22 8-32 66-18-6zM95 460l14 6-20 50-14-6zM20 470l40 15-8 18-40-12zM275 155l30 6-5 62-50-12zM312 162l48 15-10 65-55-15zM245 235l92 24-25 31h-60l-2 40-25-15z"/>
                <path fill="url(#small)" d="M45 25L150 -5 200 60 150 100 60 65zM150 110L235 105 235 135 160 130zM30 225L200 285 170 300 120 262zM0 240L170 325 165 350 0 272zM175 470L255 485V521H190zM110 255L160 215 220 240 200 280z"/>
                <path fill="url(#dense)" d="M385 190L490 215 500 280 380 250z"/>
              </g>
              <g class="hole"><path d="M425 125l40 15-10 28-35-12zM210 332l45 14v92l-70-12zM515 5h50v50l-55-12zM440 195l25 5-5 40-28-12z"/></g>
            </g>
            <g id="trees"></g>
            <path d="M305.500 260v329M363.500 260v329M422.500 260v329M481.500 260v329M539.500 260v329M598.500 260v329M278 271.500h350M278 329.500h350M278 388.500h350M278 446.500h350M278 504.500h350M278 563.500h350" stroke="#000" stroke-opacity=".55"/>
            <g class="place"><text x="342" y="381">SAMPER</text><text x="522" y="293">LA MERCED</text><text x="587" y="397">LA PERSEVERANCIA</text><text x="457" y="446">SAN MARTIN</text></g>
          </g>
          <g clip-path="url(#frame)"><path d="M525 511h103v79H525z" fill="#6e6553" filter="url(#rough)"/><path d="M605 511h23v79h-36l2-20 8-16-3-20z" fill="#1d2519" filter="url(#rough)"/>
            <path d="M573 515l12-2 8 12 12 8-14 14-2 18-12-4-2-30z" fill="#ccc" fill-opacity=".55"/><path d="M568 543h17v12h-17z" fill="#e05050" fill-opacity=".75"/></g>
          <g class="place"><text x="585" y="519">E</text><text x="597" y="525">EL PARAISO</text><text x="576" y="532">SAGRADO CORAZON</text><text x="580" y="542">LA MERCED</text><text x="576" y="553">SAN MARTIN</text><text x="582" y="560">LA MACARENA</text></g>
          <path d="M524.500 510.500h103v79h-103z" fill="none" stroke="#3a0f28"/><path d="M524.500 510.500h103v79h-103z" fill="none" stroke="#7ab0d8" stroke-dasharray="3 3"/>
          <g id="handles" fill="#fff" stroke="#2d86c8"></g>
          <g id="coords" class="coord"></g>
        </svg>
        <h1 class="headline">CURSO INTRODUCTORIO QGIS</h1>
        <div class="legend">
          <p class="l1">Leyenda</p><p class="l2">Catastro</p><p>arbolado_urbano</p>
          <p class="item tree"><i></i>&gt; 5k</p><p class="item"><i></i>&lt; 5k</p>
          <p class="item"><i class="river"></i>corriente_agua</p><p class="item"><i class="built"></i>construccion</p><p class="item"><i class="water"></i>cuerpo_agua</p><p class="item"><i class="lot"></i>lote</p><p class="item"><i class="block"></i>manzana</p>
          <p class="group">sector_catastral</p>
          <p class="item"><i class="sector"></i>Sector catastral</p><p class="item"><i class="dash"></i>Sector catastral</p><p class="group">Bing Satellite</p>
        </div>
        <p class="author">Elaboró: QGIS Colombia</p>
        <p class="date">Fecha: 28-Nov-2020</p>
      </section>
      <div class="guide"></div>
    </div>
  </div>
  <div class="splitter"><i></i></div>
  <aside class="dock">
    <div class="tabs"><button class="tab on" type="button">Elementos</button><button class="tab" type="button">Deshacer historial</button></div>
    <div class="docktitle"><span>Elementos</span><button type="button" aria-label="Flotar"><svg><use href="#i-float"/></svg></button><button type="button" aria-label="Cerrar panel"><svg><use href="#i-close"/></svg></button></div>
    <div class="list">
      <table>
        <thead><tr><th class="c"><svg class="eye"><use href="#i-eye"/></svg></th><th class="c"><svg class="pad"><use href="#i-padlock"/></svg></th><th>Elemento</th></tr></thead>
        <tbody>
          <tr class="b"><td><input type="checkbox" checked aria-label="Ver Mapa 2"></td><td><input type="checkbox" aria-label="Bloquear Mapa 2"></td><td><span><svg><use href="#i-rowmap"/></svg>Mapa 2</span></td></tr>
          <tr><td><input type="checkbox" checked aria-label="Ver fecha"></td><td><input type="checkbox" aria-label="Bloquear fecha"></td><td><span><svg><use href="#i-rowtext"/></svg>Fecha: 28-Nov-2020</span></td></tr>
          <tr><td><input type="checkbox" checked aria-label="Ver autor"></td><td><input type="checkbox" aria-label="Bloquear autor"></td><td><span><svg><use href="#i-rowtext"/></svg>Elaboró: QGIS Colombia</span></td></tr>
          <tr><td><input type="checkbox" checked aria-label="Ver título"></td><td><input type="checkbox" aria-label="Bloquear título"></td><td><span><svg><use href="#i-rowtext"/></svg>CURSO INTRODUCTORIO QGIS</span></td></tr>
          <tr><td><input type="checkbox" checked aria-label="Ver Mapa 1"></td><td><input type="checkbox" aria-label="Bloquear Mapa 1"></td><td><span><svg><use href="#i-rowmap"/></svg>Mapa 1</span></td></tr>
        </tbody>
      </table>
      <div class="scroll"><b class="up"></b><i class="thumb t1"></i><i class="track"></i><b class="down"></b></div>
    </div>
    <div class="hsplit"><i></i></div>
    <div class="tabs low"><button class="tab" type="button">Diseño</button><button class="tab on" type="button">Propiedades del elemento</button><button class="tab" type="button">Guías</button></div>
    <div class="docktitle"><span>Propiedades del elemento</span><button type="button" aria-label="Flotar"><svg><use href="#i-float"/></svg></button><button type="button" aria-label="Cerrar panel"><svg><use href="#i-close"/></svg></button></div>
    <h2 class="itemname">Mapa 2</h2>
    <div class="minibar">
      <button type="button" aria-label="Actualizar"><svg><use href="#i-ref"/></svg></button><i></i>
      <button type="button" aria-label="Fijar extensión"><svg><use href="#p-toitem"/></svg></button><button type="button" aria-label="Ver extensión"><svg><use href="#p-tocanvas"/></svg></button><i></i>
      <button type="button" aria-label="Fijar escala"><svg><use href="#p-scalein"/></svg></button><button type="button" aria-label="Ver escala"><svg><use href="#p-scaleout"/></svg></button><i></i>
      <button type="button" aria-label="Marcadores"><svg><use href="#p-book"/></svg></button><button type="button" aria-label="Mover"><svg><use href="#i-move"/></svg></button><i></i>
      <button type="button" aria-label="Etiquetado"><svg><use href="#p-abc"/></svg></button><button type="button" aria-label="Recorte"><svg><use href="#p-clip"/></svg></button>
    </div>
    <div class="props">
      <div class="form">
        <div class="box first"><label><input type="checkbox">Dibujar elementos del lienzo del mapa</label></div>
        <h3>Capas</h3>
        <div class="box layers">
          <div class="row"><label><input type="checkbox" checked>Seguir tema de mapa</label><select aria-label="Tema"><option>General</option></select><button class="over" type="button" aria-label="Definir tema"><svg><use href="#i-over"/></svg></button></div>
          <div class="row"><label><input type="checkbox">Bloquear capas</label><button class="eyebtn" type="button" aria-label="Elegir tema"><svg><use href="#i-eye"/></svg><svg class="mark"><use href="#b-menu"/></svg></button><button class="over" type="button" aria-label="Definir capas"><svg><use href="#i-over"/></svg></button></div>
          <div class="row short"><label class="off"><input type="checkbox" disabled>Bloquear estilos para las capas</label></div>
        </div>
        <h3>Extensión</h3>
        <div class="box extent">
          <div class="row"><label for="x0">X mín</label><input id="x0" value="998995.266"><button class="over" type="button" aria-label="Definir X mín"><svg><use href="#i-over"/></svg></button></div>
          <div class="row"><label for="y0">Y mín</label><input id="y0" value="1000733.619"><button class="over" type="button" aria-label="Definir Y mín"><svg><use href="#i-over"/></svg></button></div>
          <div class="row"><label for="x1">X máx</label><input id="x1" value="1003230.150"><button class="over" type="button" aria-label="Definir X máx"><svg><use href="#i-over"/></svg></button></div>
          <div class="row"><label for="y1">Y máx</label><input id="y1" value="1003950.502"><button class="over" type="button" aria-label="Definir Y máx"><svg><use href="#i-over"/></svg></button></div>
        </div>
      </div>
      <div class="scroll"><b class="up"></b><i class="track t2"></i><i class="thumb t3"></i><i class="track"></i><b class="down"></b></div>
    </div>
  </aside>
</main>
<footer class="status">
  <span class="sx">x: 0 mm</span><span class="sy">y: 74 mm</span><span class="sp">página: 1</span>
  <div class="zoombox"><input value="47.8%" aria-label="Zum"><button type="button" aria-label="Niveles"><svg class="caret"><use href="#b-menu"/></svg></button></div>
  <input class="slider" type="range" min="0" max="100" value="2" aria-label="Nivel de zum">
</footer>
<script src="app.js"></script>
</body>
</html>
```

FILE: styles.css
```css
* { box-sizing: border-box; }
html, body { height: 100%; }
body {
  margin: 0;
  display: flex;
  flex-direction: column;
  overflow: hidden;
  background: #f0f0f0;
  color: #000;
  font: 12px/16px Roboto, "Open Sans", sans-serif;
}
button, input, select { font: inherit; color: inherit; }
button { border: 0; padding: 0; background: none; }
p, h1, h2, h3 { margin: 0; }
.defs { position: absolute; width: 0; height: 0; }

.titlebar { display: flex; align-items: center; height: 23px; padding-left: 2px; background: #fff; flex: none; }
.logo { width: 17px; height: 17px; }
.title { margin-left: 4px; flex: 1; }
.winbtns { display: flex; }
.winbtns button { width: 46px; height: 22px; display: grid; place-items: center; }
.winbtns svg { width: 12px; height: 12px; }
.menubar { display: flex; gap: 14px; height: 20px; padding: 1px 0 0 10px; border-bottom: 1px solid #cdcdcd; flex: none; }
.menubar a { color: inherit; text-decoration: none; line-height: 18px; }

.toolbar {
  display: flex;
  align-items: center;
  height: 39px;
  padding-left: 4px;
  flex: none;
  background: linear-gradient(#fafafa, #eeeeee);
  border-bottom: 1px solid #b4b4b4;
}
.toolbar.second { height: 38px; }
.grip {
  width: 6px;
  height: 18px;
  margin-right: 2px;
  background: radial-gradient(circle, #b4b4b4 1px, transparent 1px) 0 0 / 3px 3px;
}
.grip.mid { margin: 0 2px 0 9px; }
.grip.flat { width: 18px; height: 6px; margin: 5px 0 2px; }
.sep { width: 1px; height: 20px; margin: 0 3px; background: #d4d4d4; }
.tool { position: relative; width: 33px; height: 33px; display: grid; place-items: center; flex: none; }
.tool svg { width: 24px; height: 24px; }
.tool:disabled svg { opacity: .3; filter: grayscale(.7); }
.tool .mark { position: absolute; right: 1px; bottom: 3px; width: 6px; height: 4px; }
.caret { width: 8px; height: 5px; }
.caret.pale { opacity: .6; margin-right: 2px; }
.pagebox, .zoombox { display: flex; border: 1px solid #a8a8a8; border-radius: 3px; background: #fff; overflow: hidden; }
.pagebox { width: 66px; height: 30px; }
.pagebox input { width: 46px; border: 0; border-right: 1px solid #a8a8a8; background: #efefef; padding: 0 4px; color: #6d6d6d; }
.pagebox button, .zoombox button { flex: 1; display: grid; place-items: center; }
.pagebox svg { opacity: .6; }

.work { flex: 1; display: flex; min-height: 0; }
.toolbox {
  width: 40px;
  flex: none;
  display: flex;
  flex-direction: column;
  align-items: center;
  background: linear-gradient(90deg, #fafafa, #eeeeee);
  border-right: 1px solid #b4b4b4;
}
.toolbox .tool { height: 32px; }
.toolbox .tool.on::before { content: ""; position: absolute; inset: 0 1px; border: 1px solid #a8a8a8; border-radius: 3px; background: #dcdcdc; }
.toolbox .tool svg { position: relative; }
.toolbox .tool .mark { position: absolute; right: 0; bottom: 4px; }
.tip {
  position: absolute;
  left: 24px;
  top: 36px;
  z-index: 5;
  padding: 1px 3px;
  border: 1px solid #000;
  background: #ffffe1;
  box-shadow: 2px 2px 1px #55555588;
  font: 12px/17px "Open Sans", sans-serif;
  white-space: nowrap;
}
.more { margin-top: 10px; }
.more svg { width: 9px; height: 10px; display: block; }

.stage { flex: 1; display: grid; grid-template: 20px 1fr / 19px 1fr; min-width: 0; border-bottom: 1px solid #b8b8b8; }
.corner { border-right: 1px solid #f00; }
.ruler { width: 100%; height: 100%; min-height: 0; font: 11px "DejaVu Sans Condensed", sans-serif; fill: #4a4a4a; }
.canvas { position: relative; background: #d6d6d6; overflow: hidden; }
.guide { position: absolute; left: 0; right: 0; top: 284px; height: 1px; background: repeating-linear-gradient(90deg, #0000c8 0 1px, transparent 1px 3px); }
.guide::before { content: ""; position: absolute; left: 2px; top: -2px; width: 5px; height: 5px; border: solid #e00; border-width: 0 0 1px 1px; transform: rotate(45deg); }
.paper { position: absolute; left: 186px; top: 90px; width: 537px; height: 380px; background: #fff; box-shadow: 6px 5px #969696; font-family: "DejaVu Sans Condensed", sans-serif; }
.map { position: absolute; left: 23px; top: 20px; width: 370px; height: 349px; }
.headline { position: absolute; left: 406px; top: 19px; width: 122px; text-align: center; font-size: 9px; line-height: 11px; }
.author, .date { position: absolute; left: 400px; width: 132px; text-align: center; font-size: 9px; line-height: 12px; }
.author { top: 328px; font-weight: 700; }
.date { top: 348px; }
.legend { position: absolute; left: 419px; top: 140px; font-size: 8px; white-space: nowrap; }
.legend .l1 { font-size: 10px; line-height: 14px; }
.legend .l2 { font-size: 9px; line-height: 16px; padding-top: 2px; }
.legend p { line-height: 12px; }
.legend .item { display: flex; align-items: center; gap: 3px; }
.legend .tree { line-height: 14px; }
.legend .group { line-height: 14px; }
.legend i { width: 14px; height: 7px; flex: none; }
.legend .tree i { width: 12px; height: 12px; margin: 0 1px; border-radius: 50%; background: radial-gradient(#3f7a27 50%, #8bab7d 70%, transparent 72%); }
.legend .river { height: 1px; background: #3a86f0; }
.legend .built { background: #e31a1c; border: 1px solid #a33; }
.legend .water { background: #8fc8ff; }
.legend .lot { background: #a7a7a7; }
.legend .block { border: 1px solid #999; }
.legend .sector { background: #a7a7a7; border: 1px solid #222; }
.legend .dash { border: 1px dashed #555; border-width: 1px 0; }

.road path { fill: none; stroke: #555a54; stroke-linejoin: round; }
.road .tan { stroke: #796f67; }
.road .deep { stroke: #2b3235; }
.road .fill { fill: #39413c; stroke: none; }
.red { fill: #e31a1c; stroke: #7a2424; stroke-width: 1.5; }
.hole { fill: #a7a7a7; stroke: #8a4444; }
.thin { fill: none; stroke: #6e1414; stroke-width: 2; }
.lotline path { fill: none; stroke: #c4c4c4; stroke-width: 3; }
.place { font: 6px "DejaVu Sans Condensed", sans-serif; text-anchor: middle; fill: #111; stroke: #fff; stroke-width: 2px; paint-order: stroke; }
.coord { font: 7px "DejaVu Sans Condensed", sans-serif; text-anchor: middle; }

.splitter { width: 7px; display: grid; place-items: center; flex: none; }
.splitter i { width: 1px; height: 17px; background: repeating-linear-gradient(#aaa 0 1px, transparent 1px 3px); }
.dock { width: 390px; flex: none; display: flex; flex-direction: column; font-family: "DejaVu Sans Condensed", sans-serif; font-size: 11px; }
.tabs { display: flex; align-items: flex-end; height: 25px; border-bottom: 1px solid #b4b4b4; flex: none; }
.tab { height: 21px; padding: 0 10px; border: 1px solid #b4b4b4; border-bottom: 0; background: #dcdcdc; border-radius: 3px 3px 0 0; white-space: nowrap; }
.tab.on { height: 23px; background: #f6f6f6; margin-bottom: -1px; }
.docktitle { display: flex; align-items: center; gap: 3px; height: 20px; padding: 1px 1px 0 4px; flex: none; font: 12px/16px "Open Sans", sans-serif; }
.docktitle span { flex: 1; }
.docktitle button, .docktitle svg { width: 11px; height: 11px; display: block; }
.list { display: flex; height: 110px; border: 1px solid #aaa; background: #fff; overflow: hidden; flex: none; }
.list table { flex: 1; border-collapse: collapse; table-layout: fixed; font: 12px/16px Roboto, "Open Sans", sans-serif; height: 110px; }
.list th { height: 20px; padding: 0 2px; text-align: left; font-weight: 400; background: linear-gradient(#fcfcfc, #ececec); border-bottom: 1px solid #b0b0b0; border-right: 1px solid #ddd; }
.list .c { width: 36px; }
.list td { height: 18px; padding: 0 3px; }
.list td span { display: flex; align-items: center; gap: 7px; padding-left: 1px; }
.list td svg { width: 14px; height: 14px; }
.list th svg { display: block; }
.list .b { font-weight: 700; }
.eye { width: 16px; height: 12px; }
.pad { width: 14px; height: 16px; margin-left: 1px; }
input[type="checkbox"] { appearance: none; width: 14px; height: 14px; margin: 0; border: 1px solid #b0b0b0; background: #fff; display: grid; place-items: center; flex: none; }
input[type="checkbox"]:checked::before { content: ""; width: 10px; height: 10px; background: #000; clip-path: polygon(10% 45%, 30% 45%, 42% 68%, 78% 5%, 98% 0, 45% 100%, 35% 100%); }
input[type="checkbox"]:disabled { background: #efefef; }
.scroll { width: 14px; flex: none; display: flex; flex-direction: column; border-left: 1px solid #b4b4b4; }
.scroll b { height: 14px; display: grid; place-items: center; background: #fafafa; }
.scroll b::before { content: ""; border: 4px solid transparent; border-top: 0; border-bottom: 4px solid #555; }
.scroll .down::before { border-top: 4px solid #555; border-bottom: 0; }
.thumb { background: linear-gradient(90deg, #fff, #f4f4f4); border: solid #b4b4b4; border-width: 1px 0; }
.track { flex: 1; background: #e4e4e4; border: solid #c8c8c8; border-width: 1px 0; }
.t1 { height: 54px; }
.t2 { flex: none; height: 33px; }
.t3 { height: 70px; }
.hsplit { height: 6px; display: grid; place-items: center; flex: none; }
.hsplit i { width: 17px; height: 1px; background: repeating-linear-gradient(90deg, #aaa 0 1px, transparent 1px 3px); }
.itemname { height: 17px; padding-left: 5px; background: #c6c6c6; font-size: 12px; line-height: 17px; flex: none; }
.minibar { display: flex; align-items: center; gap: 5px; height: 30px; padding-left: 5px; flex: none; }
.minibar button { width: 21px; display: grid; place-items: center; }
.minibar svg { width: 16px; height: 16px; }
.minibar i { width: 1px; height: 11px; background: #ccc; margin: 0 -1px; }
.props { flex: 1; display: flex; min-height: 0; border: 1px solid #aaa; overflow: hidden; }
.form { flex: 1; padding: 0 11px 0 12px; }
.box { border: 1px solid #d0d0d0; border-radius: 2px; background: #ececec; padding: 0 12px; }
.box.first { height: 48px; margin-top: -31px; padding-top: 18px; }
.form label { display: flex; align-items: center; gap: 4px; }
.form h3 { display: flex; align-items: center; gap: 8px; height: 25px; padding-top: 4px; font-size: 12px; }
.form h3::before { content: ""; margin-left: 1px; border: 6px solid transparent; border-top: 7px solid #333; border-bottom: 0; }
.row { display: flex; align-items: center; height: 32px; }
.row.short { height: 26px; }
.layers { padding-top: 9px; height: 109px; }
.layers label { flex: 1; }
.extent { padding-top: 9px; height: 149px; }
.extent label { width: 35px; }
.extent input { flex: 1; min-width: 0; height: 22px; border: 1px solid #a8a8a8; border-radius: 3px; padding: 0 3px; background: #fff; }
.off { color: #828282; }
.over { width: 24px; height: 18px; margin: 0 4px 0 9px; }
.over svg { width: 24px; height: 18px; display: block; }
select { appearance: none; width: 141px; height: 22px; padding: 0 4px; border: 1px solid #a8a8a8; border-radius: 3px; background: linear-gradient(45deg, transparent 50%, #555 50%) 126px 9px / 4px 4px no-repeat, linear-gradient(-45deg, transparent 50%, #555 50%) 130px 9px / 4px 4px no-repeat, linear-gradient(#fff, #f0f0f0); }
.eyebtn { position: relative; width: 24px; height: 23px; border: 1px solid #a8a8a8; border-radius: 3px; background: #f8f8f8; display: grid; place-items: center; --iris: #5b8cc4; }
.eyebtn svg { width: 16px; height: 12px; }
.eyebtn .mark { position: absolute; right: 1px; bottom: 2px; width: 6px; height: 4px; }

.status { display: flex; align-items: center; height: 26px; flex: none; padding: 4px 2px 0 0; font: 11px/16px "DejaVu Sans Condensed", sans-serif; justify-content: flex-end; }
.status span { padding-top: 2px; }
.sx { width: 106px; }
.sy { width: 105px; }
.sp { width: 107px; }
.zoombox { width: 201px; height: 22px; }
.zoombox input { width: 181px; border: 0; border-right: 1px solid #a8a8a8; padding: 0 3px; }
.slider { appearance: none; width: 98px; height: 14px; margin: 0 0 0 7px; background: linear-gradient(#c8c8c8, #c8c8c8) 0 5px / 100% 4px no-repeat; border-radius: 2px; }
.slider::-webkit-slider-thumb { appearance: none; width: 13px; height: 13px; border: 1px solid #999; border-radius: 3px; background: #fbfbfb; box-shadow: -4px 0 0 -2px #1e88e5; }
```

FILE: app.js
```js
const NS = 'http://www.w3.org/2000/svg';

function add(parent, tag, attrs, text) {
  const el = document.createElementNS(NS, tag);
  for (const key in attrs) el.setAttribute(key, attrs[key]);
  if (text !== undefined) el.textContent = text;
  parent.appendChild(el);
  return el;
}

// Toolbar icons
document.querySelectorAll('.tool').forEach(btn => {
  const svg = add(btn, 'svg', {});
  add(svg, 'use', { href: '#i-' + btn.dataset.icon });
  if (btn.classList.contains('drop')) {
    add(add(btn, 'svg', { class: 'mark' }), 'use', { href: '#b-menu' });
  }
});

// Rulers: one small tick every 5 mm, a label every 50 mm
const STEP = 9.03;
const rh = document.getElementById('rh');
const rv = document.getElementById('rv');

function ruler(origin, length, draw) {
  const first = Math.ceil(-origin / STEP);
  const last = Math.floor((length - origin) / STEP);
  for (let i = first; i <= last; i++) {
    const major = i % 10 === 0;
    const tick = major ? 19 : i % 5 === 0 ? 7 : 4;
    draw(Math.round(origin + i * STEP) + 0.5, tick, major ? String(i * 5) : '');
  }
}

const width = rh.getBoundingClientRect().width;
const height = rv.getBoundingClientRect().height;
ruler(186, width, (x, tick, label) => {
  add(rh, 'path', { d: `M${x} ${20 - tick}V20`, stroke: '#3c3c3c' });
  if (label && x + 20 < width) add(rh, 'text', { x, y: 12 }, label);
});
ruler(90, height, (y, tick, label) => {
  add(rv, 'path', { d: `M${19 - tick} ${y}H19`, stroke: '#3c3c3c' });
  if (label) add(rv, 'text', { transform: `translate(11 ${y + 2}) rotate(-90)`, 'text-anchor': 'end' }, label);
});

// Tree canopy: x, y, radius in a quadrant's own units
const quadrants = [
  [240, 225, '137,120,16 150,155,14 135,175,18 125,195,14 190,122,18 215,140,16 230,158,14 240,185,14 250,215,18 325,140,16 310,160,16 298,185,14 280,232,16 345,232,12 315,235,12 235,245,14 210,268,16 190,292,16 168,325,18 150,350,16 145,372,18 155,400,16 290,260,18 310,275,18 305,300,16 330,300,16 322,325,18 335,350,18 330,378,18 345,395,20 355,425,20 375,425,14 475,122,16 455,150,16 458,180,18 465,200,14 452,268,16 440,295,20 478,327,22 455,330,16 430,350,18 470,378,24 430,385,20 425,420,20 435,455,20 450,440,18 425,490,18 465,495,18 455,530,20 440,575,20 490,525,16 498,480,16 505,450,16 508,425,14 512,400,14 545,392,14 530,350,14 540,315,14 548,282,14 565,245,16 578,225,14 595,180,16 592,205,14 570,165,13 545,205,14 540,235,14 620,140,16 640,160,18 135,460,14 140,490,16 145,520,16 135,550,16 190,432,14 215,440,14 245,445,14 118,425,12'],
  [440, 225, '20,145,18 45,168,18 0,190,18 110,235,14 100,255,16 90,280,16 75,300,12 160,240,14 315,213,15 440,115,16 455,130,14 420,130,14 415,155,16 405,180,20 400,205,18 405,235,16 380,255,20 395,280,22 365,290,18 380,300,18 350,345,18 367,345,16 340,390,20 345,415,18 325,450,20 325,470,20 310,505,22 300,540,22 290,580,20 95,475,20 120,485,24 165,475,14 215,535,16 235,555,16'],
  [240, 415, '120,22,18 440,10,20 418,65,18 410,100,20 400,140,20 400,165,20 385,190,20 390,220,20 380,250,18 370,275,16 168,85,20 155,110,20 185,110,24 205,130,22 220,165,18 245,150,22 260,180,28 270,210,20 300,215,16 298,248,14 325,205,14 340,185,14 345,170,14 355,182,14 352,125,14 447,153,14 435,200,15 430,225,15 512,247,15 480,297,16 465,270,14 440,280,16 425,300,16 415,320,14 400,345,16 425,355,14 385,380,14 435,390,14 375,408,15 398,410,12 420,445,14 445,460,14 465,467,16 495,480,16 510,485,15 568,75,14'],
  [440, 415, '290,15,20 285,40,20 275,70,22 265,95,20 245,140,16 240,160,18 235,180,16 255,170,16 228,205,16 228,250,18 220,275,20 215,295,14 185,315,18 185,340,16 140,347,16 175,370,16 172,405,16 165,430,15 160,480,18 175,490,18 155,500,14 235,452,14 360,190,20 358,215,18 350,240,18 350,262,14 385,265,18 415,280,16 515,250,16 512,270,14 523,73,16 560,95,14']
];
const trees = document.getElementById('trees');
const spots = quadrants.flatMap(([ox, oy, list]) => list.split(' ').map(s => {
  const [x, y, r] = s.split(',').map(Number);
  return [ox + x / 3, oy + y / 3, r / 3];
}));
spots.forEach(([cx, cy, r]) => add(trees, 'circle', { cx: cx + 1, cy: cy + 1, r: r + 1, fill: '#1b2a14', 'fill-opacity': 0.4 }));
spots.forEach(([cx, cy, r]) => add(trees, 'circle', { cx, cy, r: r + 0.5, fill: 'url(#tree)' }));

// Grid coordinates round the map frame
const coords = document.getElementById('coords');
[305, 364, 422, 481, 540, 598].forEach(x => {
  add(coords, 'text', { x, y: 258 }, '74°O');
  add(coords, 'text', { x, y: 596 }, '74°O');
});
[271, 329, 388, 447, 505, 563].forEach(y => {
  add(coords, 'text', { transform: `translate(276 ${y}) rotate(-90)` }, '5°N');
  add(coords, 'text', { transform: `translate(635 ${y}) rotate(-90)` }, '5°N');
});

// Selection handles of the inset map
const handles = document.getElementById('handles');
[[525, 511], [572, 511], [618, 511], [525, 545], [618, 545], [525, 580], [572, 580], [618, 580]]
  .forEach(([x, y]) => add(handles, 'rect', { x: x - 0.5, y: y - 0.5, width: 10, height: 10 }));
```
